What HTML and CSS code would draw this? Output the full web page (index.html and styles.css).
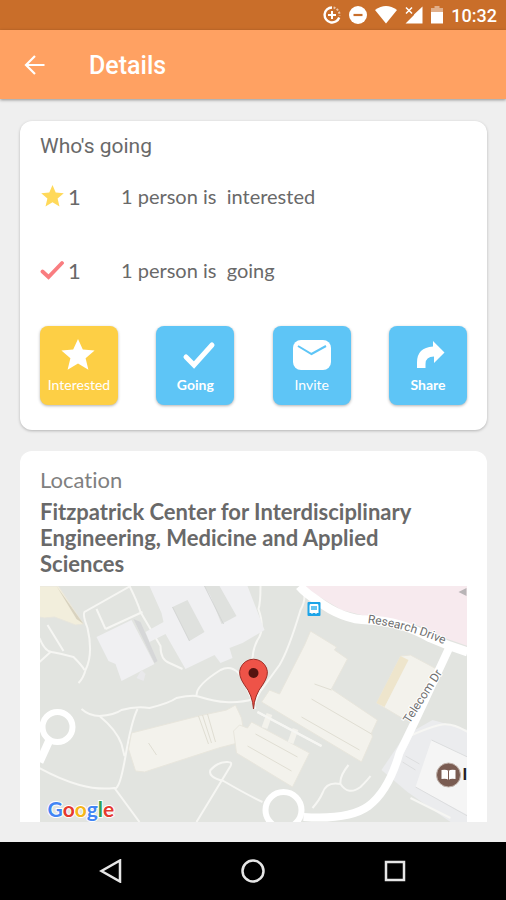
FILE: index.html
```html
<!DOCTYPE html>
<html lang="en">

<head>
    <meta charset="utf-8">
    <meta name="viewport" content="width=device-width, initial-scale=1">
    <title>Details</title>
    <link rel="stylesheet" href="styles.css">
</head>

<body>
    <!-- Status bar -->
    <div class="status-bar">
        <svg width="18" height="18" viewBox="0 0 18 18">
            <path d="M9 1.500A7.500 7.500 0 1 0 16.200 11.500" fill="none" stroke="#fff" stroke-width="2.400" />
            <path d="M10.500 1.600A7.700 7.700 0 0 1 16.600 9.500" fill="none" stroke="#fff" stroke-width="2" stroke-dasharray="2 1.400" opacity=".6" />
            <path d="M9 5v8M5 9h8" stroke="#fff" stroke-width="2" />
        </svg>
        <svg width="18" height="18" viewBox="0 0 18 18">
            <circle cx="9" cy="9" r="9" fill="#fff" />
            <path d="M4.500 9h9" stroke="#c96e2a" stroke-width="2.200" />
        </svg>
        <svg width="22" height="18" viewBox="0 0 22 18">
            <path d="M0 4Q11-4 22 4L11 17.500Z" fill="#fff" />
        </svg>
        <svg width="18" height="18" viewBox="0 0 18 18">
            <path d="M17.500.5v17H.5L9 9V8.500Z" fill="#fff" />
            <path d="M1 1.500l6 6M7 1.500l-6 6" stroke="#fff" stroke-width="1.500" />
        </svg>
        <svg width="12" height="18" viewBox="0 0 12 18">
            <path d="M0 2h3.500V0h5v2H12v5H0Z" fill="#fff" opacity=".45" />
            <path d="M0 6h12v11.500H0Z" fill="#fff" />
        </svg>
        <span class="time">10:32</span>
    </div>

    <header class="app-bar">
        <button aria-label="Back">
            <svg width="22" height="22" viewBox="0 0 22 22">
                <path d="M20.500 10H2.500M11 1 2 10l9 9" fill="none" stroke="#fff" stroke-width="2.200" />
            </svg>
        </button>
        <h1>Details</h1>
    </header>

    <main class="content">
        <section class="card">
            <h2>Who's going</h2>
            <div class="stat">
                <svg width="24" height="24" viewBox="0 0 24 24">
                    <path d="M12.500 1l3.200 7.500 8.100.7-6.200 5.300 1.900 8-7-4.200-7 4.200 1.900-8L1.200 9.200l8.100-.7Z" fill="#ffd95a" />
                </svg>
                <span class="count">1</span>
                <span class="stat-text">1 person is&nbsp; interested</span>
            </div>
            <div class="stat">
                <svg width="24" height="24" viewBox="0 0 24 24">
                    <path d="M2.500 13.500l6 5.500L22 5" fill="none" stroke="#f97d80" stroke-width="3.800" stroke-linecap="round" />
                </svg>
                <span class="count">1</span>
                <span class="stat-text">1 person is&nbsp; going</span>
            </div>

            <div class="actions">
                <button class="action selected">
                    <svg width="44" height="34" viewBox="0 0 44 34">
                        <path d="M21 3l4.800 10.600 11.800 1-9 7.600 2.800 11.600L21 27.600l-10.400 6.200 2.800-11.600-9-7.600 11.800-1Z" fill="#fff" />
                    </svg>
                    <span>Interested</span>
                </button>
                <button class="action strong">
                    <svg width="44" height="34" viewBox="0 0 44 34">
                        <path d="M13 21l8 8L39 9" fill="none" stroke="#fff" stroke-width="5" stroke-linecap="round" />
                    </svg>
                    <span>Going</span>
                </button>
                <button class="action">
                    <svg width="44" height="34" viewBox="0 0 44 34">
                        <rect x="3" y="4" width="38" height="30" rx="8" fill="#fff" />
                        <path d="M8 10l13.500 8L36 10" fill="none" stroke="#5ec5f6" stroke-width="2" />
                    </svg>
                    <span>Invite</span>
                </button>
                <button class="action strong">
                    <svg width="44" height="34" viewBox="0 0 44 34">
                        <path d="M11 32V26.500Q11 11.500 27 10.500V5L38.500 16.500 28 27V20.500Q19.500 20.500 19.500 28v4Z" fill="#fff" />
                    </svg>
                    <span>Share</span>
                </button>
            </div>
        </section>

        <section class="card location">
            <h2>Location</h2>
            <p class="place">Fitzpatrick Center for Interdisciplinary Engineering, Medicine and Applied Sciences</p>

            <svg class="map" viewBox="0 0 428 236" preserveAspectRatio="xMidYMid slice" role="img" aria-label="Map">
                <rect width="428" height="236" fill="#e2e4e0" />

                <!-- Hospital area -->
                <path d="M264 0h164v60l-20-7-28-13-42-7-36-9-25-15Z" fill="#f7eaee" />
                <path d="M427 2l-8 4 8 4Z" fill="#b8b4b6" />

                <!-- Campus block, bottom right -->
                <path d="M342 184l23-34 28-16 35 10v92h-17l-43-30Z" fill="#ebecee" />
                <path d="M392 154l36 17v58l-52-28Z" fill="#f5f5f5" />
                <path d="M366 170l14 8M363 176l13 8M392 154l36 17M376 201l52 29" fill="none" stroke="#dcddde" />

                <!-- Foot paths -->
                <g class="path">
                    <path d="M91 0L45 26Q43 29 48 42Q54 68 46 84Q44 92 39 97" />
                    <path d="M57 23l9 20M66 43l37-17M90 0q8 16 11 26l20 34Q121 74 130 77l13 6" />
                    <path d="M0 52q5 13 12 14T34 71q9 9 11 13M8 39l16 26M0 76l11-10" />
                    <path d="M42 123q8 7 18 7 15-1 22-6 14-4 28-2 20-5 27-10 14-3 20-2 20 6 29 6 15 1 28-3" />
                    <path d="M157 109q0-10 24-25 10-5 18 3 8 12 17 36" />
                    <path d="M60 130q17 14 22 28l3 12M98 123Q92 135 86 170T75 202M0 182q20 11 40 17 18 5 35 3l25 34" />
                    <path d="M157 236l34-56q2-4-2-4-10-1-18 8-3 7 13 11 24 14 39 21" />
                    <path d="M221 0q0 17-2 23 7 20-1 31-4 7-5 18l-2 34" />
                    <path d="M265 10q0 7-4 14-12 40-21 55l-16 22q-7 8-10 21" />
                    <path d="M218 126l64 34M273 222q7-8 10-15 4-12 18-9 8 12 20 3 8-8 10-11M301 198q-1-8 8-19" />
                    <path d="M370 150q18-8 30-11t28 7M371 212l40 20" />
                </g>

                <!-- Buildings -->
                <path d="M57 51l35-17 23 44-33 17-6-17-7-3Z" fill="#f0f0f2" />
                <path d="M97 92l5-8 4 4-2 7Z" fill="#e9e9eb" />
                <path d="M110 0h98l17 44-22 13-13 5 3 10-12 5-6-8-29 14-20-35-16 8-4-10 18-10-2-9Z" fill="#f0f0f2" />
                <path d="M133 21l15-7 17 32-15 9ZM171 10l-6-10h15l17 30-15 8Z" fill="#dfe1de" />
                <path d="M94 33l21 44 3-2-17-39Z" fill="#d6d7d8" />
                <path d="M133 21l17 34M165 0l19 38" fill="none" stroke="#d3d5d4" />
                <g fill="#f3f2ec" stroke="#e8e6dd">
                    <path d="M0 0h19l25 38-8 1-13-5-8-3-10 1-5-1Z" fill="#f2eedc" />
                    <path d="M92 147l67-17 28-6 9-5 6 13 4 23-27 7-74 24-9-1-7-22Z" />
                    <path d="M271 45l26 16-2 3 13 9-16 30 46 31-6 13 1 4-11 25-100-60 8-12 10 4 25-49Z" />
                    <path d="M212 136l-4 6-8-3-6 6 3 22 56 34 17-34Z" />
                    <path d="M361 70l10-1 28 15-25 50-10-1-27-16Z" />
                </g>
                <path d="M361 70l-24 47 8 4 24-47Z" fill="#eee5cc" />
                <path d="M17 0l27 38-7-5Z" fill="#d8d2bf" />
                <path d="M272 113l60 35M262 131l58 33M275 98l17 6M216 148l42 23M208 160l44 25M159 130l10 28M163 129l9 28M168 128l8 28M109 157l8 12" fill="none" stroke="#e0ded3" />
                <path d="M230 128l-5 14M256 143l-5 14" stroke="#f3f2ec" stroke-width="6" />
                <path d="M218 126l64 34" class="path" />

                <!-- Roads -->
                <g fill="none" stroke="#fff">
                    <path d="M260 0q6 7 17 14 26 20 52 20 32 1 62 18 18 8 37 14" stroke-width="9" />
                    <path d="M411 59l-26 56q-13 28-25 52-11 38-31 53-19 14-65 11" stroke-width="8" />
                    <circle cx="244" cy="224" r="18" fill="#e2e4e0" stroke-width="6" />
                    <circle cx="18" cy="141" r="15" fill="#e2e4e0" stroke-width="6" />
                    <path d="M10 154L0 176" stroke-width="8" />
                </g>

                <!-- Road names -->
                <path id="research" d="M328 37Q372 42 424 67" fill="none" />
                <path id="telecom" d="M370 138L414 70" fill="none" />
                <text class="road"><textPath href="#research">Research Drive</textPath></text>
                <text class="road"><textPath href="#telecom">Telecom Dr</textPath></text>

                <!-- Bus stop -->
                <rect x="268" y="16" width="13" height="14" rx="1" fill="#1ca4e8" />
                <path d="M271 18h7q1 0 1 2v7h-2v1h-1v-1h-3v1h-1v-1h-2v-7q0-2 1-2Z" fill="#fff" />
                <path d="M271.500 20h6v4h-6Z" fill="#66c4f1" />

                <!-- Library -->
                <circle cx="409" cy="189" r="12" fill="#7a5c52" stroke="#c2b5ae" />
                <path d="M402 184q5-1 7 1 2-2 7-1v9q-5-1-7 1-2-2-7-1Z" fill="#fff" />
                <path d="M409 185v9" stroke="#7a5c52" />
                <text class="poi" x="423" y="194">I</text>

                <!-- Pin -->
                <path d="M214 123Q213 109 205 99 198 89 201 82A14 14 0 0 1 227 82Q230 89 223 99 215 109 214 123Z" fill="#ee5348" stroke="#9c2e28" />
                <circle cx="214" cy="87" r="5" fill="#561310" />

                <text class="google" x="8" y="231"><tspan fill="#4285f4">G</tspan><tspan fill="#e5392f">o</tspan><tspan fill="#f5b61a">o</tspan><tspan fill="#4285f4">g</tspan><tspan fill="#34a04e">l</tspan><tspan fill="#e5392f">e</tspan></text>
            </svg>
        </section>
    </main>

    <!-- System navigation -->
    <nav class="nav-bar">
        <button aria-label="Back">
            <svg width="24" height="24" viewBox="0 0 24 24">
                <path d="M21 1.500v21L2.500 12Z" />
            </svg>
        </button>
        <button aria-label="Home">
            <svg width="24" height="24" viewBox="0 0 24 24">
                <circle cx="12" cy="12" r="10.500" />
            </svg>
        </button>
        <button aria-label="Recent apps">
            <svg width="24" height="24" viewBox="0 0 24 24">
                <rect x="3" y="3" width="18" height="18" />
            </svg>
        </button>
    </nav>
</body>

</html>
```
FILE: styles.css
```css
* {
    box-sizing: border-box;
}

body {
    margin: 0;
    min-height: 100vh;
    display: flex;
    flex-direction: column;
    background-color: #efefef;
    color: #696969;
    font-family: Lato, "Liberation Sans", sans-serif;
    font-variant-ligatures: none;
}

h1,
h2,
p {
    margin: 0;
}

button {
    border: none;
    padding: 0;
    background: none;
    font-family: inherit;
    cursor: pointer;
}

svg {
    display: block;
}

/* Status bar */
.status-bar {
    height: 30px;
    padding-right: 9px;
    display: flex;
    justify-content: flex-end;
    align-items: center;
    gap: 8px;
    background-color: #c96e2a;
}

.time {
    color: #fff;
    font-family: Roboto, sans-serif;
    font-size: 18px;
    font-weight: 500;
}

/* App bar */
.app-bar {
    height: 69px;
    padding: 2px 24px 0;
    display: flex;
    align-items: center;
    gap: 43px;
    background-color: #ffa162;
    box-shadow: 0 1px 3px rgba(0, 0, 0, 0.4);
}

.app-bar h1 {
    color: #fff;
    font-family: Roboto, sans-serif;
    font-size: 25px;
    font-weight: 500;
}

/* Cards */
.content {
    flex: 1;
    padding: 22px 19px 20px 20px;
}

.card {
    padding: 12px 20px 25px;
    border-radius: 12px;
    background-color: #fff;
    box-shadow: 0 1px 3px rgba(0, 0, 0, 0.25);
}

.card h2 {
    font-family: Roboto, sans-serif;
    font-size: 21px;
    font-weight: 400;
    line-height: 26px;
}

.stat {
    height: 74px;
    display: flex;
    align-items: center;
    font-size: 20px;
}

.count {
    width: 53px;
    padding-left: 4px;
    font-size: 22px;
}

.stat-text {
    padding-left: 4px;
}

.actions {
    margin-top: 19px;
    display: flex;
    justify-content: space-between;
}

.action {
    width: 78px;
    height: 79px;
    padding-top: 10px;
    display: flex;
    flex-direction: column;
    align-items: center;
    gap: 5px;
    border-radius: 8px;
    background-color: #5ec5f6;
    box-shadow: 0 1px 3px rgba(0, 0, 0, 0.3);
    color: #fff;
    font-size: 14px;
    line-height: 20px;
}

.action.selected {
    background-color: #fdcf45;
}

.action.strong {
    font-weight: 700;
}

/* Location */
.location {
    margin-top: 21px;
    padding-top: 16px;
    padding-bottom: 0;
    border-radius: 12px 12px 0 0;
    box-shadow: none;
}

.location h2 {
    margin-bottom: 6px;
    color: #808080;
    font-family: inherit;
    font-size: 22px;
}

.place {
    padding-right: 20px;
    margin-bottom: 9px;
    font-size: 22px;
    font-weight: 700;
    line-height: 26px;
}

.map {
    width: 100%;
    height: 236px;
}

.path {
    fill: none;
    stroke: #f6f6f3;
    stroke-width: 2px;
}

.road {
    fill: #707070;
    stroke: #fff;
    stroke-width: 2px;
    paint-order: stroke;
    font-family: Roboto, sans-serif;
    font-size: 12px;
}

.poi {
    fill: #222;
    font-family: Roboto, sans-serif;
    font-size: 16px;
    font-weight: 700;
}

.google {
    stroke: #fff;
    stroke-width: 2px;
    paint-order: stroke;
    font-size: 21px;
    font-weight: 700;
}

/* System navigation */
.nav-bar {
    height: 58px;
    padding: 0 40px;
    display: flex;
    background-color: #000;
}

.nav-bar button {
    flex: 1;
    display: flex;
    justify-content: center;
    align-items: center;
}

.nav-bar svg {
    fill: none;
    stroke: #e6e6e6;
    stroke-width: 2.5px;
}
```
